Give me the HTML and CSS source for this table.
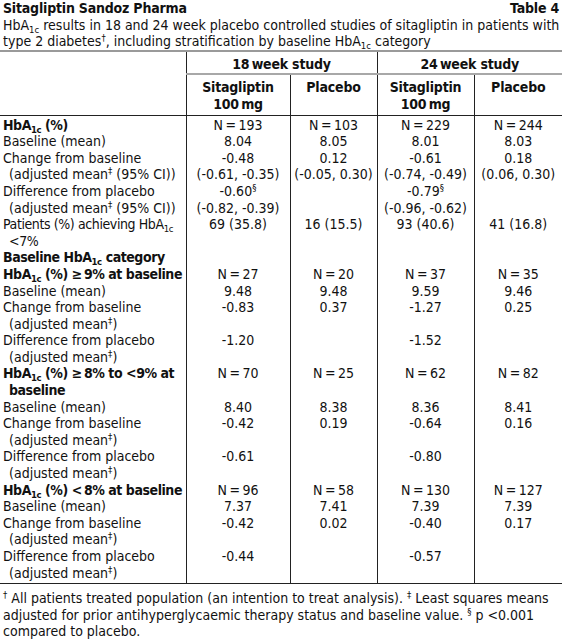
FILE: index.html
```html
<!DOCTYPE html>
<html lang="en">
<head>
<meta charset="utf-8">
<title>Sitagliptin Sandoz Pharma – Table 4</title>
<link rel="stylesheet" href="styles.css">
</head>
<body>
<div class="page">
  <div class="caption">
    <div class="title-row"><span class="title">Sitagliptin Sandoz Pharma</span><span class="title">Table 4</span></div>
    <div class="subtitle">HbA<sub>1c</sub> results in 18 and 24 week placebo controlled studies of sitagliptin in patients with<br>type 2 diabetes<sup>†</sup>, including stratification by baseline HbA<sub>1c</sub> category</div>
  </div>
  <table class="data">
    <colgroup>
      <col class="c-label"><col class="c1"><col class="c2"><col class="c3"><col class="c4">
    </colgroup>
    <thead>
      <tr class="group">
        <th class="blank" rowspan="2"></th>
        <th colspan="2" class="grp">18&#8201;week study</th>
        <th colspan="2" class="grp">24&#8201;week study</th>
      </tr>
      <tr class="sub">
        <th class="split">Sitagliptin<br>100&#8201;mg</th>
        <th class="grp-end">Placebo</th>
        <th class="split">Sitagliptin<br>100&#8201;mg</th>
        <th>Placebo</th>
      </tr>
    </thead>
    <tbody>
      <tr><td class="lbl b">HbA<sub>1c</sub> (%)</td><td>N&#8201;=&#8201;193</td><td>N&#8201;=&#8201;103</td><td>N&#8201;=&#8201;229</td><td>N&#8201;=&#8201;244</td></tr>
      <tr><td class="lbl">Baseline (mean)</td><td>8.04</td><td>8.05</td><td>8.01</td><td>8.03</td></tr>
      <tr><td class="lbl">Change from baseline<br>(adjusted mean<sup>‡</sup> (95% CI))</td><td>-0.48<br>(-0.61, -0.35)</td><td>0.12<br>(-0.05, 0.30)</td><td>-0.61<br>(-0.74, -0.49)</td><td>0.18<br>(0.06, 0.30)</td></tr>
      <tr><td class="lbl">Difference from placebo<br>(adjusted mean<sup>‡</sup> (95% CI))</td><td>-0.60<sup>§</sup><br>(-0.82, -0.39)</td><td></td><td>-0.79<sup>§</sup><br>(-0.96, -0.62)</td><td></td></tr>
      <tr><td class="lbl tight">Patients (%) achieving HbA<sub>1c</sub><br>&lt;7%</td><td>69 (35.8)</td><td>16 (15.5)</td><td>93 (40.6)</td><td>41 (16.8)</td></tr>
      <tr><td class="lbl b">Baseline HbA<sub>1c</sub> category</td><td></td><td></td><td></td><td></td></tr>
      <tr><td class="lbl b">HbA<sub>1c</sub> (%) ≥&#8201;9% at baseline</td><td>N&#8201;=&#8201;27</td><td>N&#8201;=&#8201;20</td><td>N&#8201;=&#8201;37</td><td>N&#8201;=&#8201;35</td></tr>
      <tr><td class="lbl">Baseline (mean)</td><td>9.48</td><td>9.48</td><td>9.59</td><td>9.46</td></tr>
      <tr><td class="lbl">Change from baseline<br>(adjusted mean<sup>‡</sup>)</td><td>-0.83</td><td>0.37</td><td>-1.27</td><td>0.25</td></tr>
      <tr><td class="lbl">Difference from placebo<br>(adjusted mean<sup>‡</sup>)</td><td>-1.20</td><td></td><td>-1.52</td><td></td></tr>
      <tr><td class="lbl b">HbA<sub>1c</sub> (%) ≥&#8201;8% to &lt;9% at<br>baseline</td><td>N&#8201;=&#8201;70</td><td>N&#8201;=&#8201;25</td><td>N&#8201;=&#8201;62</td><td>N&#8201;=&#8201;82</td></tr>
      <tr><td class="lbl">Baseline (mean)</td><td>8.40</td><td>8.38</td><td>8.36</td><td>8.41</td></tr>
      <tr><td class="lbl">Change from baseline<br>(adjusted mean<sup>‡</sup>)</td><td>-0.42</td><td>0.19</td><td>-0.64</td><td>0.16</td></tr>
      <tr><td class="lbl">Difference from placebo<br>(adjusted mean<sup>‡</sup>)</td><td>-0.61</td><td></td><td>-0.80</td><td></td></tr>
      <tr><td class="lbl b">HbA<sub>1c</sub> (%) &lt;&#8201;8% at baseline</td><td>N&#8201;=&#8201;96</td><td>N&#8201;=&#8201;58</td><td>N&#8201;=&#8201;130</td><td>N&#8201;=&#8201;127</td></tr>
      <tr><td class="lbl">Baseline (mean)</td><td>7.37</td><td>7.41</td><td>7.39</td><td>7.39</td></tr>
      <tr><td class="lbl">Change from baseline<br>(adjusted mean<sup>‡</sup>)</td><td>-0.42</td><td>0.02</td><td>-0.40</td><td>0.17</td></tr>
      <tr><td class="lbl">Difference from placebo<br>(adjusted mean<sup>‡</sup>)</td><td>-0.44</td><td></td><td>-0.57</td><td></td></tr>
    </tbody>
  </table>
  <p class="notes"><sup>†</sup> All patients treated population (an intention to treat analysis). <sup>‡</sup> Least squares means<br>adjusted for prior antihyperglycaemic therapy status and baseline value. <sup>§</sup> p &lt;0.001<br>compared to placebo.</p>
</div>
</body>
</html>
```

FILE: styles.css
```css
html, body {
  margin: 0;
  padding: 0;
  background: #ffffff;
}

body {
  font-family: "DejaVu Sans Condensed", "Liberation Sans Narrow", "Liberation Sans", sans-serif;
  font-size: 14px;
  line-height: 16.6px;
  color: #111111;
}

.page {
  width: 562px;
}

.caption {
  padding: 0 3px 0 3px;
  white-space: nowrap;
}

.title-row {
  display: flex;
  justify-content: space-between;
}

.title {
  font-weight: bold;
  letter-spacing: -0.2px;
}

sub, sup {
  line-height: 0;
  font-size: 9.5px;
}

sub {
  vertical-align: -3px;
}

sup {
  vertical-align: 5px;
}

.data {
  width: 562px;
  border-collapse: collapse;
  table-layout: fixed;
  border-top: 2px solid #9a9a9a;
  border-bottom: 1px solid #222222;
}

.c-label { width: 186px; }
.c1 { width: 104px; }
.c2 { width: 87px; }
.c3 { width: 97px; }
.c4 { width: 88px; }

.data th {
  font-weight: bold;
  text-align: center;
  vertical-align: top;
  padding: 0;
  letter-spacing: -0.2px;
}

.data .blank {
  border-right: 1px solid #222222;
  border-bottom: 1px solid #222222;
}

.group th.grp {
  border-bottom: 2px solid #a8a8a8;
  padding: 4px 0 1px;
}

.group th.grp:nth-child(2) {
  border-right: 1px solid #222222;
}

.sub th {
  padding: 4px 0 2px;
  border-bottom: 1px solid #222222;
}

.sub th.split,
.sub th.grp-end {
  border-right: 1px solid #222222;
}

.data td {
  padding: 0;
  text-align: center;
  vertical-align: top;
  border-right: 1px solid #222222;
  white-space: nowrap;
}

.data td:last-child {
  border-right: none;
}

.data tbody tr:first-child td {
  padding-top: 1px;
}

.data tbody tr:last-child td {
  padding-bottom: 2px;
}

.data td.lbl {
  text-align: left;
  padding-left: 9px;
  text-indent: -6px;
}

.data td.tight {
  letter-spacing: -0.4px;
}

.data td.b {
  font-weight: bold;
  letter-spacing: -0.45px;
}

.notes {
  margin: 0;
  padding: 6px 3px 0 3px;
  white-space: nowrap;
}
```
